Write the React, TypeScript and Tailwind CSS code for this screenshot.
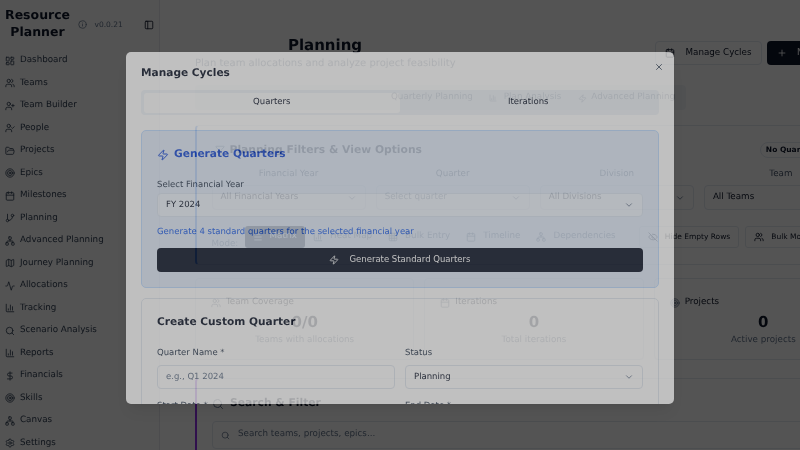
import {
  Activity,
  BarChart3,
  Calendar,
  ChevronDown,
  DollarSign,
  EyeOff,
  Filter,
  FolderOpen,
  GitBranch,
  Grid3x3,
  Info,
  LayoutDashboard,
  Map,
  Menu,
  Network,
  PanelLeft,
  Plus,
  Search,
  Settings,
  Target,
  UserCheck,
  UserPlus,
  Users,
  X,
  Zap,
} from 'lucide-react';
import type { ReactNode } from 'react';

const navItems = [
  { label: 'Dashboard', icon: LayoutDashboard },
  { label: 'Teams', icon: Users },
  { label: 'Team Builder', icon: UserPlus },
  { label: 'People', icon: UserCheck },
  { label: 'Projects', icon: FolderOpen },
  { label: 'Epics', icon: Target },
  { label: 'Milestones', icon: Calendar },
  { label: 'Planning', icon: GitBranch },
  { label: 'Advanced Planning', icon: Network },
  { label: 'Journey Planning', icon: Map },
  { label: 'Allocations', icon: Activity },
  { label: 'Tracking', icon: BarChart3 },
  { label: 'Scenario Analysis', icon: Search },
  { label: 'Reports', icon: BarChart3 },
  { label: 'Financials', icon: DollarSign },
  { label: 'Skills', icon: Target },
  { label: 'Canvas', icon: Network },
  { label: 'Settings', icon: Settings },
];

const pageFilters = [
  { label: 'Financial Year', value: 'All Financial Years', muted: false },
  { label: 'Quarter', value: 'Select quarter', muted: true },
  { label: 'Division', value: 'All Divisions', muted: false },
  { label: 'Team', value: 'All Teams', muted: false },
];

const viewModes = [
  { label: 'Matrix', icon: Menu, active: true },
  { label: 'Heat Map', icon: BarChart3, active: false },
  { label: 'Bulk Entry', icon: Grid3x3, active: false },
  { label: 'Timeline', icon: Calendar, active: false },
  { label: 'Dependencies', icon: Network, active: false },
];

const stats = [
  { label: 'Team Coverage', icon: Users, value: '0/0', note: 'Teams with allocations' },
  { label: 'Iterations', icon: Calendar, value: '0', note: 'Total iterations' },
  { label: 'Projects', icon: Target, value: '0', note: 'Active projects' },
];

function Sidebar() {
  return (
    <aside className="w-[160px] h-[450px] shrink-0 border-r border-[#e5e7eb] bg-[#fafafa] overflow-hidden">
      <div className="flex items-center h-[49.5px] pl-[5px]">
        <h1 className="w-[65px] -mt-[3px] text-center text-[12.5px] leading-[17.5px] font-bold text-[#0f172a]">Resource Planner</h1>
        <Info className="w-[9px] h-[9px] ml-[7.5px] text-[#64748b]" />
        <span className="ml-[8px] text-[7.5px] text-[#64748b]">v0.0.21</span>
        <PanelLeft className="w-[10px] h-[10px] ml-[21px] text-[#0f172a]" />
      </div>
      <nav>
        {navItems.map((item) => (
          <div key={item.label} className="flex items-center h-[22.5px] pl-[5px] gap-[5px] text-[8.75px] text-[#334155]">
            <item.icon className="w-[10px] h-[10px]" />
            <span>{item.label}</span>
          </div>
        ))}
      </nav>
    </aside>
  );
}

function PageContent() {
  return (
    <main className="flex-1 min-w-0 h-[450px] overflow-hidden pl-[35px] bg-white">
      <div className="w-[678px]">
        <div className="flex items-start pt-[36px] h-[85px]">
          <div className="w-[260px] text-center">
            <h2 className="text-[15px] leading-[19px] font-bold text-[#0f172a]">Planning</h2>
            <p className="mt-[1px] text-[10px] leading-[15px] text-[#64748b] whitespace-nowrap">Plan team allocations and analyze project feasibility</p>
          </div>
          <button className="ml-auto mt-[5px] h-[24px] w-[107px] flex items-center justify-center gap-[10px] rounded-[4px] border border-[#e2e8f0] text-[8.75px] text-[#0f172a]">
            <Calendar className="w-[10px] h-[10px]" />
            Manage Cycles
          </button>
          <button className="ml-[5px] mt-[5px] h-[24px] w-[106px] pl-[10px] flex items-center gap-[10px] rounded-[4px] bg-[#0f172a] text-[8.75px] text-white whitespace-nowrap">
            <Plus className="w-[10px] h-[10px]" />
            New Allocation
          </button>
        </div>

        <div className="flex justify-end items-center w-[491px] h-[25px] pt-[1px] rounded-[4px] bg-[#f1f5f9] text-[8.75px] text-[#64748b]">
          <span className="mr-[16px]">Quarterly Planning</span>
          <BarChart3 className="w-[8px] h-[8px] mr-[7px]" />
          <span className="mr-[17px]">Plan Analysis</span>
          <Zap className="w-[9px] h-[9px] mr-[4px]" />
          <span className="mr-[11px]">Advanced Planning</span>
        </div>

        <section className="mt-[15px] h-[140px] rounded-[4px] border border-[#e2e8f0] border-l-[2.5px] border-l-[#3b82f6] pl-[14.5px] pr-[14px]">
          <div className="flex items-center h-[43px] pt-[5px]">
            <Filter className="w-[10px] h-[10px] ml-[3px] text-[#64748b]" />
            <h3 className="ml-[5px] text-[10.75px] font-bold text-[#0f172a]">Planning Filters &amp; View Options</h3>
            <span className="ml-auto px-[5px] py-[1px] rounded-full border border-[#e2e8f0] text-[7.5px] font-bold text-[#0f172a] whitespace-nowrap">No Quarter Selected</span>
          </div>
          <div className="grid grid-cols-4 gap-[10px]">
            {pageFilters.map((f) => (
              <div key={f.label}>
                <div className="text-center text-[8.75px] leading-[10px] text-[#475569]">{f.label}</div>
                <div className="mt-[6px] h-[25px] flex items-center justify-between px-[8px] rounded-[4px] border border-[#e2e8f0] text-[8.75px]">
                  <span className={f.muted ? 'text-[#64748b]' : 'text-[#0f172a]'}>{f.value}</span>
                  <ChevronDown className="w-[10px] h-[10px] text-[#64748b]" />
                </div>
              </div>
            ))}
          </div>
          <div className="flex items-center mt-[16px] h-[22px] text-[8.75px] text-[#64748b]">
            <span className="w-[33px] pt-[15px]">Mode:</span>
            {viewModes.map((m) => (
              <div key={m.label} className={`flex items-center gap-[7px] h-[22px] px-[8px] rounded-[3px] whitespace-nowrap ${m.active ? 'bg-[#0f172a] text-white' : ''}`}>
                <m.icon className="w-[10px] h-[10px]" />
                {m.label}
              </div>
            ))}
            <button className="ml-[15px] flex items-center gap-[7px] h-[22px] px-[8px] rounded-[3px] border border-[#e2e8f0] text-[7.5px] text-[#0f172a] whitespace-nowrap">
              <EyeOff className="w-[10px] h-[10px]" />
              Hide Empty Rows
            </button>
            <button className="ml-[6px] flex items-center gap-[7px] h-[22px] px-[8px] rounded-[3px] border border-[#e2e8f0] text-[7.5px] text-[#0f172a] whitespace-nowrap">
              <Users className="w-[10px] h-[10px]" />
              Bulk Mode
            </button>
          </div>
        </section>

        <section className="grid grid-cols-3 gap-[10px] mt-[13px]">
          {stats.map((s) => (
            <div key={s.label} className="h-[82px] rounded-[4px] border border-[#e2e8f0] px-[15px] pt-[17px]">
              <div className="flex items-center gap-[5px] text-[8.75px] leading-[13px] text-[#0f172a]">
                <s.icon className="w-[10px] h-[10px] text-[#64748b]" />
                {s.label}
              </div>
              <div className="mt-[3px] text-center text-[15px] leading-[20px] font-bold text-[#0f172a]">{s.value}</div>
              <div className="mt-[2px] text-center text-[8.75px] leading-[12px] text-[#64748b]">{s.note}</div>
            </div>
          ))}
        </section>

        <section className="mt-[18px] h-[100px] rounded-[4px] border border-[#e2e8f0] border-l-[2.5px] border-l-[#9333ea] pl-[15px] pr-[12px]">
          <div className="flex items-center gap-[6px] h-[42px] pt-[7px]">
            <Search className="w-[12px] h-[12px] text-[#64748b]" />
            <h3 className="text-[10.75px] font-bold text-[#0f172a]">Search &amp; Filter</h3>
          </div>
          <div className="flex items-center gap-[8px] h-[28px] px-[8px] rounded-[4px] border border-[#e2e8f0] text-[8.75px] text-[#64748b]">
            <Search className="w-[9px] h-[9px]" />
            Search teams, projects, epics...
          </div>
        </section>
      </div>
    </main>
  );
}

function FieldLabel({ children }: { children: ReactNode }) {
  return <div className="text-[8.5px] leading-[10px] font-medium text-[#334155]">{children}</div>;
}

function ManageCyclesDialog() {
  return (
    <div className="absolute left-[126px] top-[52px] w-[548px] h-[352px] overflow-hidden rounded-[5px] bg-white opacity-[0.63] shadow-lg px-[15px] text-[#0f172a]">
      <X className="absolute right-[10.5px] top-[10px] w-[10px] h-[10px] text-[#334155]" />
      <h2 className="mt-[14px] text-[10.6px] leading-[15px] font-bold">Manage Cycles</h2>
      <div className="mt-[9px] grid grid-cols-2 h-[25px] p-[2.5px] rounded-[4px] bg-[#f1f5f9] text-[8.5px]">
        <div className="flex items-center justify-center rounded-[3px] bg-white">Quarters</div>
        <div className="flex items-center justify-center">Iterations</div>
      </div>

      <section className="mt-[15px] h-[158px] rounded-[5px] border border-[#bfdbfe] bg-[#e3edfb] p-[15px]">
        <div className="flex items-center gap-[5px] h-[15px] mt-[1px]">
          <Zap className="w-[12px] h-[12px] text-[#1d4ed8]" />
          <h3 className="text-[10.6px] font-bold text-[#1d4ed8]">Generate Quarters</h3>
        </div>
        <div className="mt-[18px]"><FieldLabel>Select Financial Year</FieldLabel></div>
        <div className="mt-[3px] h-[24px] flex items-center justify-between px-[8px] rounded-[4px] border border-[#dbe5f1] bg-white/40 text-[8.5px]">
          FY 2024
          <ChevronDown className="w-[10px] h-[10px] text-[#64748b]" />
        </div>
        <p className="mt-[9px] text-[8.5px] leading-[12.5px] text-[#2563eb]">Generate 4 standard quarters for the selected financial year</p>
        <button className="mt-[9px] w-full h-[24px] flex items-center justify-center gap-[10px] rounded-[4px] bg-[#0f172a] text-[8.5px] text-white">
          <Zap className="w-[10px] h-[10px]" />
          Generate Standard Quarters
        </button>
      </section>

      <section className="mt-[10px] h-[200px] rounded-[5px] border border-[#e2e8f0] px-[15px] pt-[16px]">
        <h3 className="text-[10.6px] leading-[15px] font-bold">Create Custom Quarter</h3>
        <div className="grid grid-cols-2 gap-x-[10px] gap-y-[12px] mt-[18px]">
          <div>
            <FieldLabel>Quarter Name *</FieldLabel>
            <div className="mt-[7px] h-[24px] flex items-center px-[8px] rounded-[4px] border border-[#e2e8f0] text-[8.5px] text-[#64748b]">e.g., Q1 2024</div>
          </div>
          <div>
            <FieldLabel>Status</FieldLabel>
            <div className="mt-[7px] h-[24px] flex items-center justify-between px-[8px] rounded-[4px] border border-[#e2e8f0] text-[8.5px]">
              Planning
              <ChevronDown className="w-[10px] h-[10px] text-[#64748b]" />
            </div>
          </div>
          <FieldLabel>Start Date *</FieldLabel>
          <FieldLabel>End Date *</FieldLabel>
        </div>
      </section>
    </div>
  );
}

export default function App() {
  return (
    <div className="relative w-[800px] h-[450px] overflow-hidden blur-[0.3px] [text-rendering:geometricPrecision] font-['DejaVu_Sans',sans-serif]">
      <div className="flex">
        <Sidebar />
        <PageContent />
      </div>
      <div className="absolute inset-0 bg-black/67" />
      <ManageCyclesDialog />
    </div>
  );
}
